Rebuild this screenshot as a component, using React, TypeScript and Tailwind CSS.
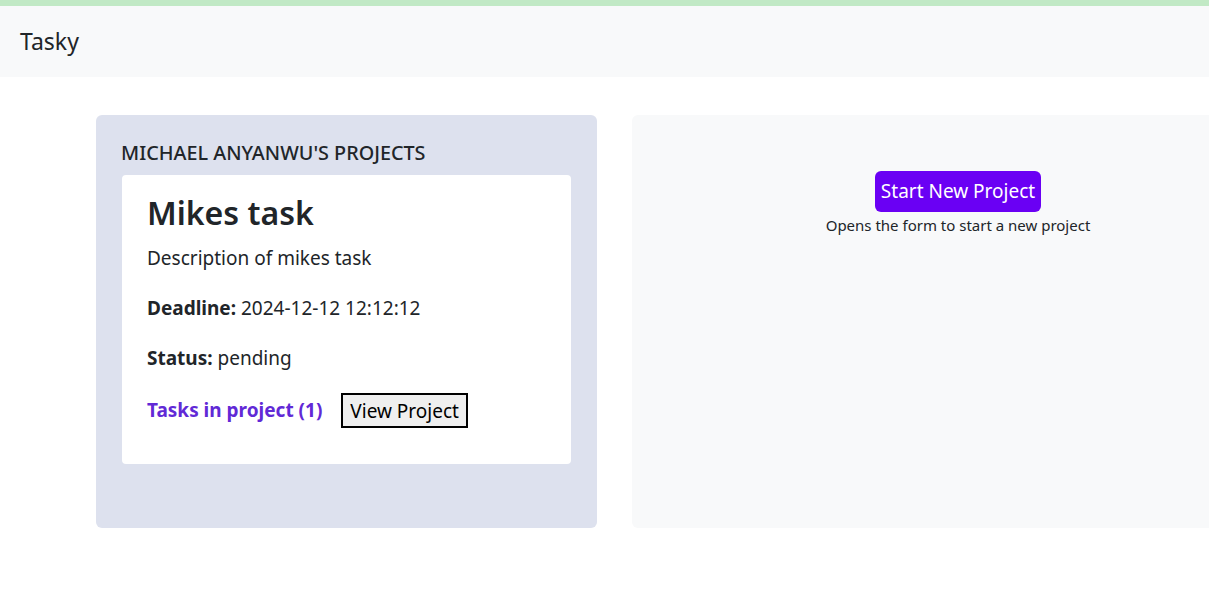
import React from "react";

const font = { fontFamily: '"Noto Sans", "Open Sans", sans-serif' };

type Project = {
  title: string;
  description: string;
  deadline: string;
  status: string;
  taskCount: number;
};

const projects: Project[] = [
  {
    title: "Mikes task",
    description: "Description of mikes task",
    deadline: "2024-12-12 12:12:12",
    status: "pending",
    taskCount: 1,
  },
];

function ProjectCard({ project }: { project: Project }) {
  return (
    <div className="rounded-[4px] bg-white px-[25px] pt-[15px] pb-[36px] text-[#212529]">
      <h2 className="text-[32px] leading-[46px] font-semibold">{project.title}</h2>
      <p className="mt-[7px] text-[19px] leading-[30px]">{project.description}</p>
      <p className="mt-[20px] text-[19px] leading-[30px]">
        <span className="font-bold">Deadline:</span> {project.deadline}
      </p>
      <p className="mt-[20px] text-[19px] leading-[30px]">
        <span className="font-bold">Status:</span> {project.status}
      </p>
      <div className="mt-[20px] flex items-center gap-[19px]">
        <a className="text-[19px] font-bold text-[#6129d6]" href="#">
          Tasks in project ({project.taskCount})
        </a>
        <button className="h-[35px] border-2 border-black bg-[#efefef] px-[7px] text-[19px] leading-[30px] text-black">
          View Project
        </button>
      </div>
    </div>
  );
}

export default function App() {
  return (
    <div className="min-h-screen overflow-hidden bg-white" style={font}>
      <div className="h-[6px] bg-[#c1e9c5]" />
      <nav className="flex h-[71px] items-center bg-[#f8f9fa] px-[20px]">
        <span className="text-[23px] text-[#212529]">Tasky</span>
      </nav>

      <main className="mt-[38px] flex items-stretch gap-[35px] pl-[96px]">
        <section className="w-[501px] shrink-0 rounded-[6px] bg-[#dde1ee] px-[26px] pt-[26px] pb-[64px]">
          <h5 className="mb-[10px] -ml-px text-[19.8px] leading-[24px] font-medium text-[#212529]">
            MICHAEL ANYANWU'S PROJECTS
          </h5>
          {projects.map((p) => (
            <ProjectCard key={p.title} project={p} />
          ))}
        </section>

        <section className="flex w-[652px] shrink-0 flex-col items-center rounded-[6px] bg-[#f8f9fa] pt-[56px]">
          <button className="h-[41px] rounded-[6px] bg-[#6a00f4] px-[6px] text-[19px] text-white">
            Start New Project
          </button>
          <p className="mt-[3px] text-[15px] leading-[20px] text-[#212529]">
            Opens the form to start a new project
          </p>
        </section>
      </main>
    </div>
  );
}
